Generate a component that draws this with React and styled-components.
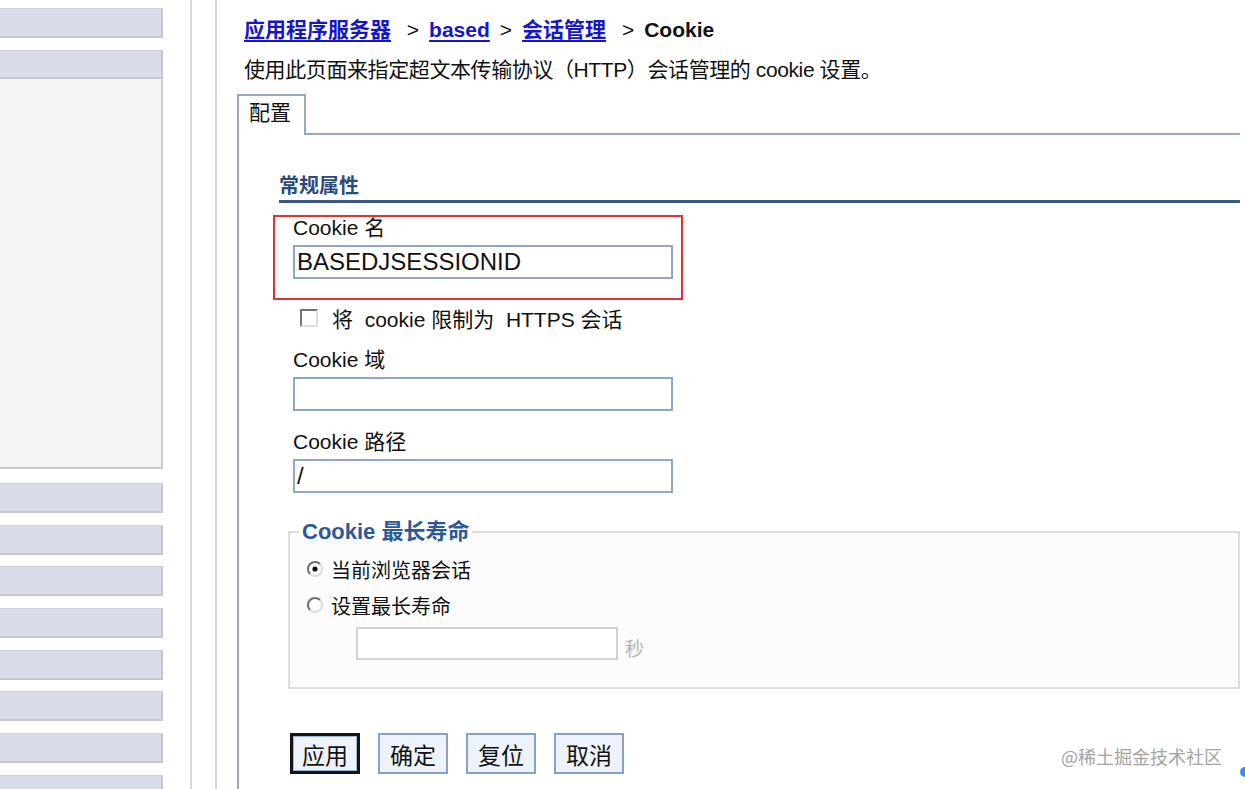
import styled, { createGlobalStyle } from 'styled-components'

const GlobalStyle = createGlobalStyle`
  body {
    margin: 0;
    background: #ffffff;
    font-family: "Liberation Sans", "Noto Sans CJK SC", sans-serif;
    color: #111111;
  }
`

const Page = styled.div`
  position: relative;
  display: flex;
  flex-direction: row;
  height: 789px;
  overflow: hidden;
`

const Sidebar = styled.div`
  width: 163px;
  flex-shrink: 0;
  display: flex;
  flex-direction: column;
  padding-top: 8px;
`

const NavBar = styled.div`
  height: ${p => p.$height ?? 30}px;
  box-sizing: border-box;
  flex-shrink: 0;
  background: #d9dce9;
  border-top: 1px solid #cfd0d8;
  border-right: 2px solid #c6c7cf;
  border-bottom: 2px solid #c6c7cf;
  margin-bottom: ${p => p.$gap ?? 11.7}px;
`

const NavPanel = styled.div`
  height: 390px;
  flex-shrink: 0;
  box-sizing: border-box;
  background: #f5f5f5;
  border-right: 2px solid #cbcbcb;
  border-bottom: 2px solid #cbcbcb;
  margin-bottom: 14px;
`

const Gutter = styled.div`
  width: 74px;
  flex-shrink: 0;
  display: flex;
  flex-direction: row;
`

const GutterLine = styled.div`
  width: 2px;
  background: #d8d8d8;
  margin-left: ${p => p.$offset}px;
`

const Main = styled.div`
  flex: 1;
  display: flex;
  flex-direction: column;
  padding-right: 5px;
  padding-top: 18px;
`

const Breadcrumb = styled.div`
  padding-left: 7px;
  font-size: 21px;
  line-height: 24px;
  font-weight: bold;
  white-space: nowrap;
`

const Crumb = styled.a`
  color: #1616c8;
  text-decoration: underline;
  text-underline-offset: 3px;
  text-decoration-thickness: 2px;
`

const Sep = styled.span`
  font-weight: normal;
  padding: 0 10px;
`

const Description = styled.div`
  padding-left: 7px;
  margin-top: 16px;
  font-size: 21px;
  line-height: 24px;
  white-space: nowrap;
  letter-spacing: -0.4px;
`

const TabRow = styled.div`
  display: flex;
  flex-direction: row;
  margin-top: 12px;
  height: 41px;
`

const Tab = styled.div`
  width: 69px;
  box-sizing: border-box;
  border: 2px solid #94a7c6;
  border-bottom: none;
  padding: 6px 0 0 10px;
  font-size: 21px;
  line-height: 22px;
  background: #ffffff;
`

const TabFill = styled.div`
  flex: 1;
  border-bottom: 2px solid #94a7c6;
`

const Panel = styled.div`
  flex: 1;
  border-left: 2px solid #94a7c6;
  padding-left: 40px;
  display: flex;
  flex-direction: column;
`

const SectionTitle = styled.div`
  margin-top: 40px;
  font-size: 20px;
  line-height: 22px;
  font-weight: bold;
  color: #2b4b7d;
  padding-bottom: 3px;
  border-bottom: 3px solid #3a5787;
`

const Form = styled.div`
  margin-left: 14px;
  display: flex;
  flex-direction: column;
`

const Highlight = styled.div`
  width: 410px;
  height: 85px;
  box-sizing: border-box;
  margin: 12px 0 0 -20px;
  padding-left: 18px;
  border: 2px solid #e0322f;
`

const Field = styled.div`
  margin-top: ${p => p.$top || 0}px;
`

const Label = styled.div`
  font-size: 21px;
  line-height: 22px;
`

const TextBox = styled.div`
  width: 380px;
  height: 34px;
  box-sizing: border-box;
  margin-top: 6px;
  border: 2px solid #8ea6c8;
  background: #ffffff;
  padding-left: 2px;
  font-size: 24px;
  line-height: 30px;
  white-space: nowrap;
`

const CheckRow = styled.div`
  display: flex;
  align-items: center;
  margin: 7px 0 0 7px;
  height: 22px;
  font-size: 21px;
`

const CheckBox = styled.span`
  width: 18px;
  height: 18px;
  box-sizing: border-box;
  border-top: 2px solid #747474;
  border-left: 2px solid #747474;
  border-right: 2px solid #dedede;
  border-bottom: 2px solid #dedede;
  background: #ffffff;
  margin-right: 14px;
`

const Fieldset = styled.fieldset`
  margin: 26px 0 0 -5px;
  padding: 0 0 26px 16px;
  border: 2px solid #dddddd;
  background: #fcfcfc;
  min-width: 0;
`

const Legend = styled.legend`
  margin-left: -7px;
  padding: 0 3px;
  font-size: 22px;
  line-height: 26px;
  font-weight: bold;
  color: #2d5a94;
`

const RadioRow = styled.div`
  display: flex;
  align-items: center;
  margin-top: 12px;
  height: 24px;
  font-size: 20px;
  font-family: "Noto Sans CJK SC", sans-serif;
`

const RadioIcon = styled.svg`
  width: 18px;
  height: 18px;
  margin-right: 7px;
`

const SecondsRow = styled.div`
  display: flex;
  align-items: center;
  margin: 9px 0 0 50px;
`

const SmallBox = styled.div`
  width: 262px;
  height: 33px;
  box-sizing: border-box;
  border: 2px solid #d2d2d2;
  background: #ffffff;
`

const Unit = styled.span`
  margin: 8px 0 0 7px;
  font-size: 19px;
  color: #b4b4b4;
  font-family: "Noto Sans CJK SC", sans-serif;
`

const ButtonRow = styled.div`
  display: flex;
  flex-direction: row;
  gap: 18px;
  margin: 44px 0 0 -3px;
`

const Button = styled.button`
  width: 70px;
  height: 41px;
  box-sizing: border-box;
  padding: 0;
  background: #eef3fb;
  border: ${p => p.$primary ? '3px solid #151515' : '2px solid #86a2c9'};
  box-shadow: ${p => p.$primary ? 'inset 0 0 0 1px #9db6d8' : 'none'};
  font-family: "Noto Sans CJK SC", sans-serif;
  font-size: 23px;
  line-height: 30px;
  color: #111111;
`

const Watermark = styled.div`
  position: absolute;
  right: 23px;
  top: 745px;
  font-size: 18px;
  line-height: 22px;
  color: #a3a3a3;
  font-family: "Noto Sans CJK SC", sans-serif;
`

const Dot = styled.div`
  position: absolute;
  right: -5px;
  top: 767px;
  width: 10px;
  height: 10px;
  border-radius: 50%;
  background: #3b8cf0;
`

function Radio({ checked }) {
  return (
    <RadioIcon viewBox="0 0 18 18">
      <circle cx="9" cy="9" r="7" fill="#ffffff" />
      <path d="M4 14 A7 7 0 0 1 14 4" fill="none" stroke="#6e6e6e" strokeWidth="2" />
      <path d="M14 4 A7 7 0 0 1 4 14" fill="none" stroke="#dcdcdc" strokeWidth="2" />
      {checked && <circle cx="9" cy="9" r="2.6" fill="#111111" />}
    </RadioIcon>
  )
}

const lowerBars = [0, 1, 2, 3, 4, 5, 6, 7]

export default function App() {
  return (
    <Page>
      <GlobalStyle />
      <Sidebar>
        <NavBar $gap={12} />
        <NavBar $gap={0} $height={29} />
        <NavPanel />
        {lowerBars.map(i => <NavBar key={i} />)}
      </Sidebar>
      <Gutter>
        <GutterLine $offset={27} />
        <GutterLine $offset={23} />
      </Gutter>
      <Main>
        <Breadcrumb>
          <Crumb>应用程序服务器</Crumb>
          <Sep> &gt;</Sep>
          <Crumb>based</Crumb>
          <Sep>&gt;</Sep>
          <Crumb>会话管理</Crumb>
          <Sep> &gt;</Sep>
          Cookie
        </Breadcrumb>
        <Description>使用此页面来指定超文本传输协议（HTTP）会话管理的 cookie 设置。</Description>
        <TabRow>
          <Tab>配置</Tab>
          <TabFill />
        </TabRow>
        <Panel>
          <SectionTitle>常规属性</SectionTitle>
          <Form>
            <Highlight>
              <Label>Cookie 名</Label>
              <TextBox>BASEDJSESSIONID</TextBox>
            </Highlight>
            <CheckRow>
              <CheckBox />
              将&nbsp; cookie 限制为&nbsp; HTTPS 会话
            </CheckRow>
            <Field $top={20}>
              <Label>Cookie 域</Label>
              <TextBox />
            </Field>
            <Field $top={20}>
              <Label>Cookie 路径</Label>
              <TextBox>/</TextBox>
            </Field>
            <Fieldset>
              <Legend>Cookie 最长寿命</Legend>
              <RadioRow>
                <Radio checked />
                当前浏览器会话
              </RadioRow>
              <RadioRow>
                <Radio />
                设置最长寿命
              </RadioRow>
              <SecondsRow>
                <SmallBox />
                <Unit>秒</Unit>
              </SecondsRow>
            </Fieldset>
            <ButtonRow>
              <Button $primary>应用</Button>
              <Button>确定</Button>
              <Button>复位</Button>
              <Button>取消</Button>
            </ButtonRow>
          </Form>
        </Panel>
      </Main>
      <Watermark>@稀土掘金技术社区</Watermark>
      <Dot />
    </Page>
  )
}
